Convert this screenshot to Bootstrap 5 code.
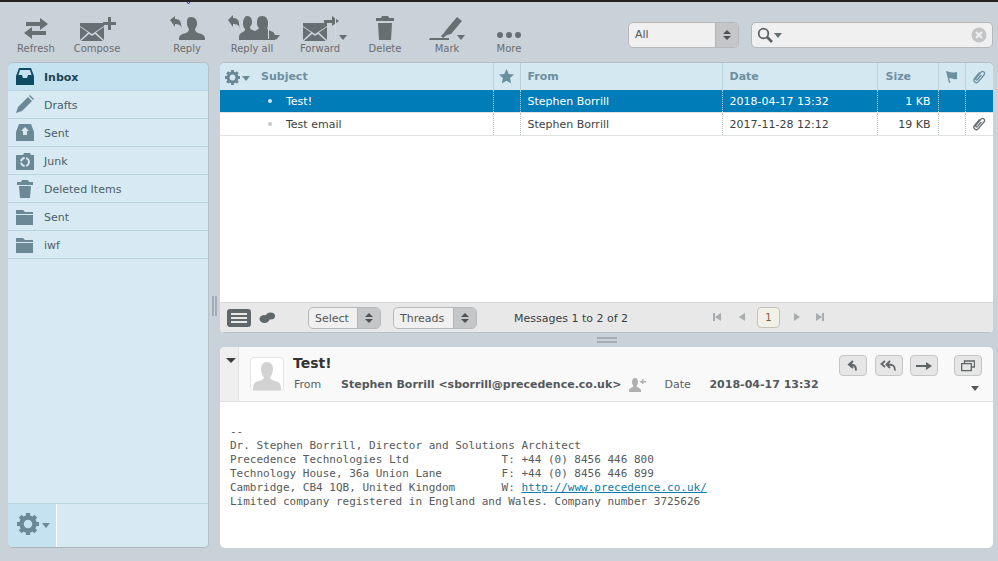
<!DOCTYPE html>
<html lang="en"><head><meta charset="utf-8"><title>Inbox</title>
<link rel="stylesheet" href="https://cdn.jsdelivr.net/npm/bootstrap@5.3.0/dist/css/bootstrap.min.css">
<script src="https://cdn.jsdelivr.net/npm/bootstrap@5.3.0/dist/js/bootstrap.bundle.min.js"></script>
<style>
html,body{height:561px;overflow:hidden}
body{background:#c9d1d9;font-family:"DejaVu Sans",Verdana,sans-serif;font-size:11px;color:#3c3f42;border-top:2px solid #222;position:relative}
svg{display:block}
.topmark{position:absolute;left:185px;top:-2px;width:7px;height:5px}
.tbar{height:61px;padding-left:6px;align-items:flex-start}
.tbtn{width:60px;height:55px;padding-top:12px;color:#6b6e70;font-size:10px;text-align:center;flex:none;position:relative;white-space:nowrap}
.tbtn svg{margin:0 auto;height:28px}
.tbtn .tl{display:block;line-height:13px}
.tsep{position:absolute;top:13px;width:1px;height:24px;background:#d3d9de}
.drop-mark{position:absolute;width:0;height:0;border:4px solid transparent;border-top:5px solid #666f72;border-bottom:0}
.sel-wrap{height:26px;background:#f0f0f0;border:1px solid #b5b9bc;border-radius:5px;overflow:hidden;flex:none;color:#50565a}
.sel-wrap .stxt{padding:0 6px;flex:1;line-height:24px}
.sel-arrows{width:23px;background:#c4c6c7;border-left:1px solid #b0b3b5;display:flex;flex-direction:column;align-items:center;justify-content:center;gap:2px}
.sel-arrows i{display:block;width:0;height:0;border-left:4px solid transparent;border-right:4px solid transparent}
.sel-arrows i.u{border-bottom:4px solid #4f5254}
.sel-arrows i.d{border-top:4px solid #4f5254}
.filter{width:111px;margin-left:89px;margin-top:20px}
.search{width:242px;margin-left:12px;margin-top:20px;height:26px;background:#f0f0f0;border:1px solid #b5b9bc;border-radius:5px;flex:none;padding:0 5px}
.mainrow{height:485px}
.side{width:201px;margin-left:8px;background:#d7eaf3;border-radius:5px;border-bottom:1px solid #aab4ba;border-right:1px solid #b4bfc6;box-shadow:0 -1px 0 #b4bec6;overflow:hidden;flex:none}
.fold{background:transparent;border:0;border-bottom:1px solid #b8d5e0;border-radius:0!important;height:28px;padding:4px 0 0 36px;display:flex;align-items:center;color:#4b5d68;font-size:11px;position:relative}
.fold svg{position:absolute;left:7px;top:4px}
.fold.on{background:#c5e2f0;color:#1f4456;font-weight:700}
.sfoot{height:44px;border-top:1px solid #b8d5e0}
.sgear{width:49px;background:#c5e2f0;border-right:1px solid #fff;padding:9px 0 0 9px;position:relative}
.vgut{width:11px;flex:none}
.vgrip{width:5px;height:20px;margin-left:3px;border-left:2px solid #a4adb4;border-right:2px solid #a4adb4}
.rightcol{width:773px;flex:none}
.msgs{height:270px;background:#fff;border-radius:5px;overflow:hidden;box-shadow:0 -1px 0 #b4bec6;flex:none}
.mtable{table-layout:fixed;width:773px;margin:0;border-collapse:collapse;font-size:11px;color:#3c3f42}
.mtable th{height:27px;background:#d4e8f2;color:#6d8f9e;font-weight:700;padding:2px 7px 0;border-right:1px solid #b9d3de;border-bottom:0;vertical-align:middle;font-size:11px;box-shadow:none}
.mtable th.gearcell{padding-left:5px}
.mtable td{height:23px;padding:3px 7px 0;border-right:1px dotted #b9c2c7;border-bottom:1px solid #e0e3e5;vertical-align:middle;background:#fff;box-shadow:none;white-space:nowrap;color:#3c3f42}
.mtable th:last-child,.mtable td:last-child{border-right:0}
.mtable tr.cur td{background:#007cb9;color:#fff;border-right-color:#a9d4e9;height:22px;padding-top:2px}
.mtable .nl{padding:0;text-align:center}
.mtable .nl svg{margin:0 auto}
.dotc{display:inline-block;width:4px;height:4px;border-radius:50%;background:#c8c8c8;margin:0 14px 2px 41px}
.cur .dotc{background:#cfe7f3}
.mfoot{height:31px;background:#e8e8e8;border-top:1px solid #d8d8d8;border-bottom:1px solid #b8bfc5;padding-left:7px;position:relative}
.listbtn{width:24px;height:18px;background:#5f676b;border-radius:3px;padding:4px 4px;display:flex;flex-direction:column;justify-content:space-between}
.listbtn b{display:block;height:2px;background:#e8e8e8}
.mini-sel{height:22px;border-radius:5px;background:#f0f0f0}
.mini-sel .stxt{line-height:21px}
.count{margin-left:37px;width:198px;color:#3c3f42;padding-top:3px}
.pgi{margin-bottom:2px}
.pg{width:23px;height:21px;border:1px solid #c2c2b8;border-radius:4px;background:#f2f1e8;text-align:center;line-height:20px;font-size:10px;color:#7a5a3a}
.hgut{height:14px;flex:none}
.hgrip{width:20px;height:6px;margin-left:377px;border-top:2px solid #a4adb4;border-bottom:2px solid #a4adb4}
.prev{height:201px;background:#fff;border-radius:5px;overflow:hidden;flex:none}
.phead{height:55px;background:#f9f9f9;border-bottom:1px solid #e2e2e2;position:relative}
.pgut{width:19px;background:#efefef;border-right:1px solid #e2e2e2;flex:none;padding:11px 0 0 6px}
.ptri{width:0;height:0;border:5px solid transparent;border-top:5px solid #3c3f42;border-bottom:0}
.avatar{width:34px;height:34px;border:1px solid #e4e4e4;border-radius:4px;background:#fff;margin:10px 9px 0 11px;overflow:hidden;flex:none}
.ptitle{font-weight:700;font-size:14px;color:#333;line-height:18px;padding-top:7px;margin-bottom:5px}
.pline{line-height:14px;color:#5c6063;padding-left:1px}
.pline b{color:#55585b;font-weight:700}
.pbt{position:absolute;top:8px;width:28px;height:21px;background:#e6e6e6;border:1px solid #c6c6c6;border-radius:4px;display:flex;align-items:center;justify-content:center}
.pbody{margin:0;padding:23px 10px 0;font-family:"DejaVu Sans Mono","Liberation Mono",monospace;font-size:11px;line-height:14px;color:#555a5d;overflow:hidden}
.pbody a{color:#0a7cb0}
</style></head>
<body class="d-flex flex-column">
<svg class="topmark" viewBox="0 0 7 5"><path d="M1 0l2.500 4L6 0" fill="#fff" stroke="#22c" stroke-width="1"/></svg>
<div class="tbar d-flex">
 <div class="tbtn"><svg width="40" height="28" viewBox="0 0 40 28" fill="#666f72"><path d="M10 8h14V4l8 6-8 6v-4H10zM30 13v4H16v-4l-8 6 8 6v-4h14z"/></svg><span class="tl">Refresh</span></div>
 <div class="tbtn" style="margin-left:1px"><svg width="40" height="28" viewBox="0 0 40 28" fill="#666f72"><path d="M3 9h24v3L15 20 3 12z"/><path d="M3 13l8 5.500L3 26zM27 13v13l-8-7.500zM4 27l8-7 3 2 3-2 8 7z"/><path d="M31 3h3v5h5v3h-5v5h-3v-5h-5V8h5z"/></svg><span class="tl">Compose</span></div>
 <div class="tbtn me-2" style="margin-left:30px"><svg width="40" height="28" viewBox="0 0 40 28" fill="#666f72"><path d="M3 6l5-4v3c4 0 6 2 6 6l1 3c-1-2-3-4-7-4v3z"/><path d="M24 3c4 0 6 3 6 6 0 3-1 5-2 6 0 2 1 3 3 4 4 1 7 2 7 6v1H12v-1c0-4 3-5 7-6 2-1 3-2 3-4-1-1-2-3-2-6 0-3 0-6 4-6z"/></svg><span class="tl">Reply</span></div>
 <div class="tbtn" style="margin-left:-3px"><svg width="50" height="28" viewBox="0 0 50 28" fill="#666f72"><path d="M1 6l5-5v3c4 0 6 2 6 6l1 4c-1-3-3-4-7-4v3z"/><path d="M20 2c3 0 5 2 5 6 0 2-1 4-2 5 0 2 1 3 3 3 2 1 3 2 3 4v6H12v-3c0-3 2-4 4-5 2-1 2-2 2-3-1-1-2-3-2-5 0-5 2-8 4-8z"/><path d="M35 2c4 0 6 3 6 7 0 3 0 4-1 5 1 2 4 3 6 4 2 1 2 4 2 8H24c0-4 0-7 2-8s5-2 6-4c-1-1-2-2-2-5 0-4 1-7 5-7z"/></svg><span class="tl">Reply all</span><i class="tsep" style="left:46px"></i><i class="drop-mark" style="left:50px;top:33px"></i></div>
 <div class="tbtn ms-2"><svg width="40" height="28" viewBox="0 0 40 28" fill="#666f72"><path d="M3 9h24v3L15 20 3 12z"/><path d="M3 13l8 5.500L3 26zM27 13v13l-8-7.500zM4 27l8-7 3 2 3-2 8 7z"/><path d="M24 6h8V2l7 5-7 5V9h-8z"/></svg><span class="tl">Forward</span><i class="tsep" style="left:45px"></i><i class="drop-mark" style="left:49px;top:33px"></i></div>
 <div class="tbtn" style="margin-left:5px"><svg width="22" height="28" viewBox="0 0 22 28" fill="#666f72"><path d="M8 2h6l1 2h5v3H2V4h5zM4 9h14l-1 17H5z"/></svg><span class="tl">Delete</span></div>
 <div class="tbtn" style="margin-left:2px"><svg width="36" height="28" viewBox="0 0 36 28" fill="#666f72"><path d="M17 16L28 3l5 4-11 13-4 1-4 3-2-2 3-3z"/><path d="M1 24h19v2H0z"/></svg><span class="tl">Mark</span><i class="drop-mark" style="left:40px;top:33px"></i></div>
 <div class="tbtn" style="margin-left:2px"><svg width="30" height="28" viewBox="0 0 30 28" fill="#666f72"><circle cx="6" cy="21" r="3"/><circle cx="15" cy="21" r="3"/><circle cx="24" cy="21" r="3"/></svg><span class="tl">More</span></div>
 <div class="sel-wrap filter d-flex"><span class="stxt">All</span><span class="sel-arrows"><i class="u"></i><i class="d"></i></span></div>
 <div class="search d-flex align-items-center justify-content-between">
  <span class="d-flex align-items-center"><svg width="16" height="16" viewBox="0 0 16 16" fill="none" stroke="#5b6266" stroke-width="1.800"><circle cx="6.500" cy="6.500" r="4.800"/><path d="M10 10l5 5" stroke-width="2.600"/></svg><i class="drop-mark" style="position:static;margin-left:1px"></i></span>
  <svg width="16" height="16" viewBox="0 0 16 16"><circle cx="8" cy="8" r="7.500" fill="#c2c4c5"/><path d="M5 5l6 6M11 5l-6 6" stroke="#f0f0f0" stroke-width="2"/></svg>
 </div>
</div>
<div class="mainrow d-flex">
 <aside class="side d-flex flex-column">
  <div class="list-group flex-grow-1">
   <div class="list-group-item fold on"><svg width="20" height="20" viewBox="0 0 20 20" fill="#0d4c63"><path d="M4 1h12l3 8v9H1V9zM5 3L3.500 8H7l1 3h4l1-3h3.500L15 3z" fill-rule="evenodd"/></svg>Inbox</div>
   <div class="list-group-item fold"><svg width="20" height="20" viewBox="0 0 20 20" fill="#6a8895"><path d="M1 18l2-6L13 2l4 4L7 16zM14 1l1-1 4 4-1 1z"/></svg>Drafts</div>
   <div class="list-group-item fold"><svg width="20" height="20" viewBox="0 0 20 20" fill="#6a8895"><path d="M4 1h12l3 8v9H1V9zM10 4L6 8h2v4h4V8h2z" fill-rule="evenodd"/></svg>Sent</div>
   <div class="list-group-item fold"><svg width="20" height="20" viewBox="0 0 20 20" fill="#6a8895"><path d="M1 4h7l1-2h6l1 2h3v15H1z"/><circle cx="10" cy="11" r="4" fill="none" stroke="#d7eaf3" stroke-width="1.800" stroke-dasharray="5 1.500"/></svg>Junk</div>
   <div class="list-group-item fold"><svg width="20" height="20" viewBox="0 0 20 20" fill="#6a8895"><path d="M7 1h6l1 2h4v3H2V3h4zM4 7h12l-1 12H5z"/></svg>Deleted Items</div>
   <div class="list-group-item fold"><svg width="20" height="20" viewBox="0 0 20 20" fill="#6a8895"><path d="M1 3h7l2 2h8v2H1zM1 8h17v10H1z"/></svg>Sent</div>
   <div class="list-group-item fold"><svg width="20" height="20" viewBox="0 0 20 20" fill="#6a8895"><path d="M1 3h7l2 2h8v2H1zM1 8h17v10H1z"/></svg>iwf</div>
  </div>
  <div class="sfoot d-flex">
   <div class="sgear"><svg width="22" height="22" viewBox="0 0 22 22"><circle cx="11" cy="11" r="6.500" fill="none" stroke="#6a8895" stroke-width="4.500"/><path d="M11 0v22M0 11h22M3.200 3.200l15.600 15.600M18.800 3.200L3.200 18.800" stroke="#6a8895" stroke-width="4.200" stroke-dasharray="4 14 4"/></svg><i class="drop-mark" style="left:34px;top:19px;border-top-color:#6a8895"></i></div>
  </div>
 </aside>
 <div class="vgut d-flex align-items-center"><div class="vgrip"></div></div>
 <div class="rightcol d-flex flex-column">
  <section class="msgs d-flex flex-column">
   <div class="flex-grow-1">
   <table class="table mtable">
    <colgroup><col style="width:273px"><col style="width:27px"><col style="width:202px"><col style="width:155px"><col style="width:61px"><col style="width:27px"><col style="width:28px"></colgroup>
    <thead><tr>
     <th class="gearcell"><span class="d-flex align-items-center"><svg width="15" height="15" viewBox="0 0 22 22"><circle cx="11" cy="11" r="6.500" fill="none" stroke="#6a8895" stroke-width="4.500"/><path d="M11 0v22M0 11h22M3.200 3.200l15.600 15.600M18.800 3.200L3.200 18.800" stroke="#6a8895" stroke-width="4.200" stroke-dasharray="4 14 4"/></svg><i class="drop-mark" style="position:static;margin:1px 11px 0 2px;border-top-color:#6a8895"></i>Subject</span></th>
     <th class="nl"><svg width="15" height="15" viewBox="0 0 16 16" fill="#6a8f9f"><path d="M8 0l2.400 5.300 5.600.6-4.200 3.800 1.200 5.800L8 12.500 3 15.500l1.200-5.800L0 5.900l5.600-.6z"/></svg></th>
     <th>From</th><th>Date</th><th class="px-2">Size</th>
     <th class="nl"><svg width="13" height="13" viewBox="0 0 13 13" fill="#6a8f9f"><path d="M1 1c3 .5 3.500 1.500 6 1.500 2 0 3 0 5-.5v7c-2 .5-3 0-5-.5-1-.3-2-.3-3-.1L5.500 12.500 4 13z"/></svg></th>
     <th class="nl"><svg width="14" height="16" viewBox="0 0 14 16" fill="none" stroke="#6a8f9f" stroke-width="1.300"><path d="M4.500 4v8a2.500 2.500 0 0 0 5 0V3a2 2 0 0 0-4 0v8a.7.7 0 0 0 2 0V5" transform="rotate(40 7 8)"/></svg></th>
    </tr></thead>
    <tbody>
     <tr class="cur"><td><span class="dotc"></span>Test!</td><td></td><td>Stephen Borrill</td><td>2018-04-17 13:32</td><td class="text-end">1 KB</td><td></td><td></td></tr>
     <tr><td><span class="dotc"></span>Test email</td><td></td><td>Stephen Borrill</td><td>2017-11-28 12:12</td><td class="text-end">19 KB</td><td></td><td class="nl"><svg width="14" height="16" viewBox="0 0 14 16" fill="none" stroke="#6b6e70" stroke-width="1.300"><path d="M4.500 4v8a2.500 2.500 0 0 0 5 0V3a2 2 0 0 0-4 0v8a.7.7 0 0 0 2 0V5" transform="rotate(40 7 8)"/></svg></td></tr>
    </tbody>
   </table>
   </div>
   <div class="mfoot d-flex align-items-center">
    <div class="listbtn"><b></b><b></b><b></b></div>
    <svg class="ms-2" width="16" height="12" viewBox="0 0 16 12" fill="#5f676b"><ellipse cx="5.500" cy="7" rx="5" ry="4"/><ellipse cx="11.500" cy="4" rx="4.500" ry="3.500"/></svg>
    <div class="sel-wrap mini-sel d-flex" style="margin-left:33px;width:73px"><span class="stxt">Select</span><span class="sel-arrows"><i class="u"></i><i class="d"></i></span></div>
    <div class="sel-wrap mini-sel d-flex" style="margin-left:12px;width:84px"><span class="stxt">Threads</span><span class="sel-arrows"><i class="u"></i><i class="d"></i></span></div>
    <div class="count">Messages 1 to 2 of 2</div>
    <svg class="pgi" width="10" height="10" viewBox="0 0 10 10" fill="#a9acae"><path d="M1 1h2v8H1zM9 1v8L3 5z"/></svg>
    <svg class="pgi" style="margin-left:15px" width="10" height="10" viewBox="0 0 10 10" fill="#a9acae"><path d="M8 1v8L2 5z"/></svg>
    <div class="pg" style="margin-left:10px">1</div>
    <svg class="pgi" style="margin-left:12px" width="10" height="10" viewBox="0 0 10 10" fill="#a9acae"><path d="M2 1v8l6-4z"/></svg>
    <svg class="pgi" style="margin-left:13px" width="10" height="10" viewBox="0 0 10 10" fill="#a9acae"><path d="M1 1v8l6-4zM7 1h2v8H7z"/></svg>
   </div>
  </section>
  <div class="hgut d-flex align-items-center"><div class="hgrip"></div></div>
  <section class="prev">
   <div class="phead d-flex">
    <div class="pgut"><div class="ptri"></div></div>
    <div class="avatar"><svg width="32" height="32" viewBox="0 0 32 32" fill="#d2d2d2"><path d="M16 4c4 0 6 3 6 7s-2 7-3 9c1 2 5 3 8 4 2 1 3 3 3 8H2c0-5 1-7 3-8 3-1 7-2 8-4-1-2-3-5-3-9s2-7 6-7z"/></svg></div>
    <div>
     <div class="ptitle">Test!</div>
     <div class="pline d-flex align-items-center"><span style="width:47px">From</span><b>Stephen Borrill &lt;sborrill@precedence.co.uk&gt;</b><svg class="ms-2" width="17" height="15" viewBox="0 0 17 15" fill="#b0b0b0"><path d="M6 1c2 0 3 2 3 4s-1 3-1.500 4.500c1 1 4.500 1.500 4.500 4V15H0v-1.500c0-2.500 3.500-3 4.500-4C4 8 3 7 3 5s1-4 3-4zM13 2h1.500v2H17v1.500h-2.500V7H13V5.500h-2V4h2z"/></svg><span style="margin-left:18px;width:45px">Date</span><b>2018-04-17 13:32</b></div>
    </div>
    <div class="pbt" style="left:619px"><svg width="14" height="12" viewBox="0 0 14 12" fill="none" stroke="#5f6467" stroke-width="2"><path d="M7 1L3 4.500 7 8M3 4.500c5 0 7 1 7 6"/></svg></div>
    <div class="pbt" style="left:655px"><svg width="18" height="12" viewBox="0 0 18 12" fill="none" stroke="#5f6467" stroke-width="1.800"><path d="M5 1L1.500 4 5 7M10 1L6.500 4.500 10 8M7 4.500c6 0 8 1 8 6"/></svg></div>
    <div class="pbt" style="left:690px"><svg width="16" height="10" viewBox="0 0 16 10" fill="#5f6467"><path d="M0 4h10V1l6 4-6 4V6H0z"/></svg></div>
    <div class="pbt" style="left:734px"><svg width="14" height="12" viewBox="0 0 14 12" fill="none" stroke="#5f6467" stroke-width="1.300"><path d="M3.500 3V1h10v6h-3M.7 3.700h9.600v7H.7z"/></svg></div>
    <i class="drop-mark" style="left:751px;top:39px;border-top-color:#55585b"></i>
   </div>
   <pre class="pbody">--
Dr. Stephen Borrill, Director and Solutions Architect
Precedence Technologies Ltd              T: +44 (0) 8456 446 800
Technology House, 36a Union Lane         F: +44 (0) 8456 446 899
Cambridge, CB4 1QB, United Kingdom       W: <a href="#">http://www.precedence.co.uk/</a>
Limited company registered in England and Wales. Company number 3725626</pre>
  </section>
 </div>
</div>
</body></html>
